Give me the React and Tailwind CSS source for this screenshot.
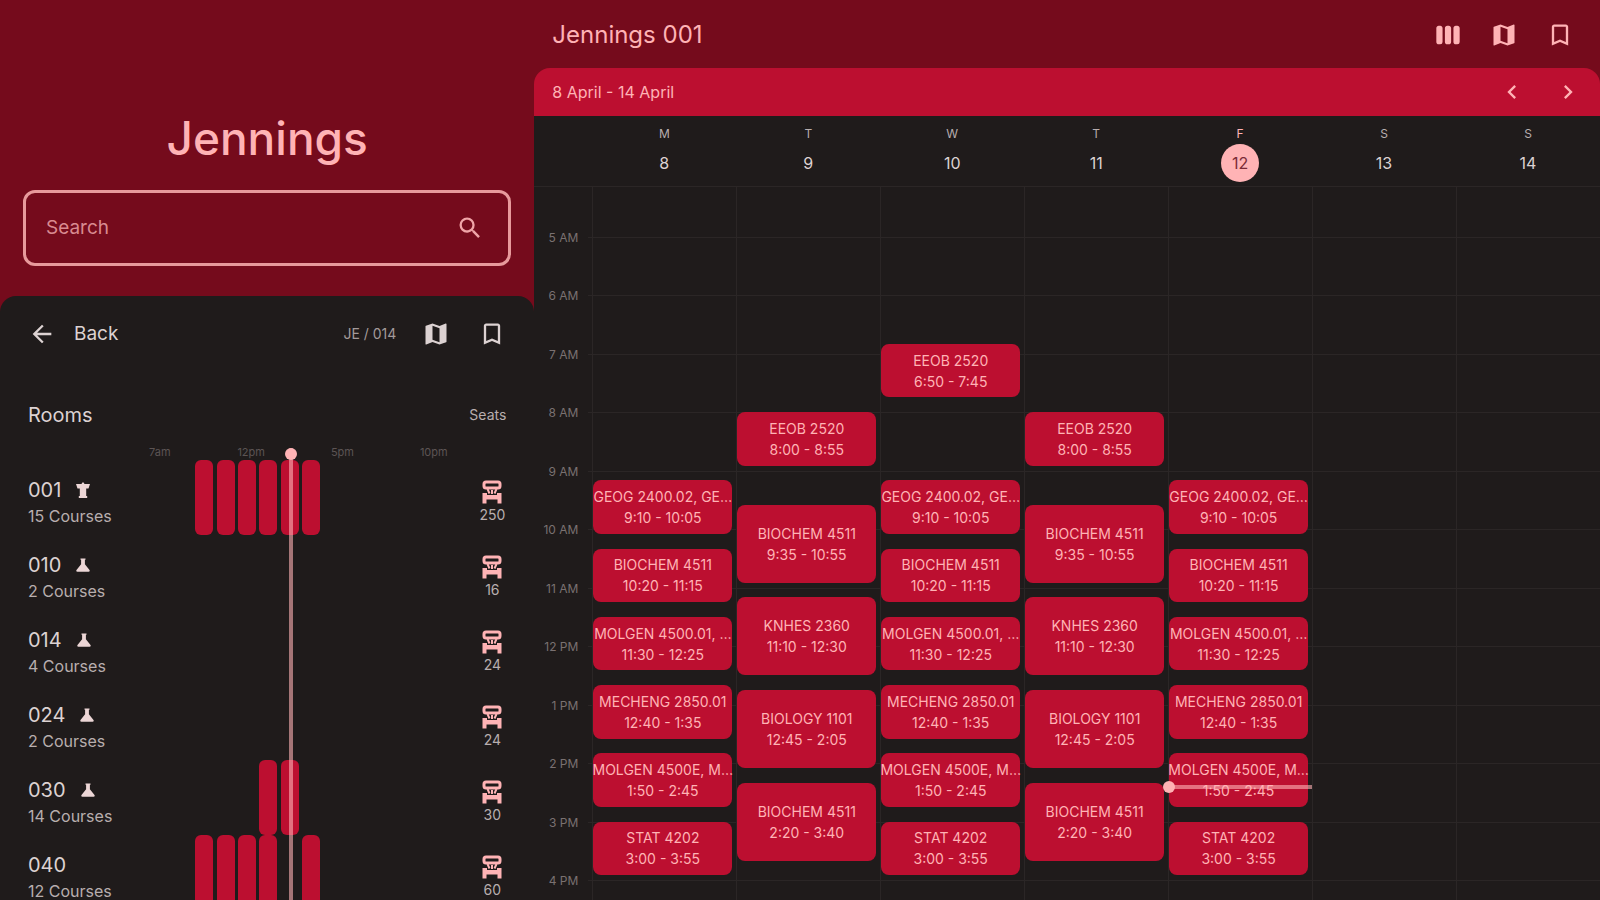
import {
    MdArrowBack,
    MdBookmarkBorder,
    MdChevronLeft,
    MdChevronRight,
    MdMap,
    MdSearch,
    MdViewWeek,
} from 'react-icons/md';

// First hour shown in the calendar and how many hours it spans
const START = 4;
const HOURS = 14;
const NOW = 14 + 25 / 60;

const hourLabels = ['5 AM', '6 AM', '7 AM', '8 AM', '9 AM', '10 AM', '11 AM', '12 PM', '1 PM', '2 PM', '3 PM', '4 PM'];

const mwf = [
    { name: 'GEOG 2400.02, GE…', time: '9:10 - 10:05', from: 9 + 10 / 60, to: 10 + 5 / 60 },
    { name: 'BIOCHEM 4511', time: '10:20 - 11:15', from: 10 + 20 / 60, to: 11.25 },
    { name: 'MOLGEN 4500.01, …', time: '11:30 - 12:25', from: 11.5, to: 12 + 25 / 60 },
    { name: 'MECHENG 2850.01', time: '12:40 - 1:35', from: 12 + 40 / 60, to: 13 + 35 / 60 },
    { name: 'MOLGEN 4500E, M…', time: '1:50 - 2:45', from: 13 + 50 / 60, to: 14.75 },
    { name: 'STAT 4202', time: '3:00 - 3:55', from: 15, to: 15 + 55 / 60 },
];

const tr = [
    { name: 'EEOB 2520', time: '8:00 - 8:55', from: 8, to: 8 + 55 / 60 },
    { name: 'BIOCHEM 4511', time: '9:35 - 10:55', from: 9 + 35 / 60, to: 10 + 55 / 60 },
    { name: 'KNHES 2360', time: '11:10 - 12:30', from: 11 + 10 / 60, to: 12.5 },
    { name: 'BIOLOGY 1101', time: '12:45 - 2:05', from: 12.75, to: 14 + 5 / 60 },
    { name: 'BIOCHEM 4511', time: '2:20 - 3:40', from: 14 + 20 / 60, to: 15 + 40 / 60 },
];

const early = { name: 'EEOB 2520', time: '6:50 - 7:45', from: 6 + 50 / 60, to: 7.75 };

const days = [
    { letter: 'M', date: 8, events: mwf },
    { letter: 'T', date: 9, events: tr },
    { letter: 'W', date: 10, events: [early, ...mwf] },
    { letter: 'T', date: 11, events: tr },
    { letter: 'F', date: 12, events: mwf, today: true },
    { letter: 'S', date: 13, events: [] },
    { letter: 'S', date: 14, events: [] },
];

const rooms = [
    { id: '001', icon: 'lectern', courses: 15, seats: 250, slots: [0, 1, 2, 3, 4, 5] },
    { id: '010', icon: 'lab', courses: 2, seats: 16, slots: [] },
    { id: '014', icon: 'lab', courses: 4, seats: 24, slots: [] },
    { id: '024', icon: 'lab', courses: 2, seats: 24, slots: [] },
    { id: '030', icon: 'lab', courses: 14, seats: 30, slots: [3, 4] },
    { id: '040', courses: 12, seats: 60, slots: [0, 1, 2, 3, 5] },
];

const ticks = [
    { label: '7am', hour: 7 },
    { label: '12pm', hour: 12 },
    { label: '5pm', hour: 17 },
    { label: '10pm', hour: 22 },
];

const dayPct = (hour) => `${(hour / 24) * 100}%`;
const calPct = (hour) => `${((hour - START) / HOURS) * 100}%`;

function LecternIcon() {
    return (
        <svg viewBox="0 0 16 16" className="size-4 text-[#ecd6d6]" fill="currentColor">
            <path d="M1 2h5.500l.8-1.500h1.400L9.500 2H15l-1.500 4.500h-2.300V14h1v2H3.800v-2h1V6.500H2.500z" />
        </svg>
    );
}

function LabIcon() {
    return (
        <svg viewBox="0 0 16 16" className="size-4 text-[#ecd6d6]" fill="currentColor">
            <path d="M5.500 1.500h5v1.300h-.6v4.400l4.600 5.800c.6 1 .1 1.700-.9 1.700H2.400c-1 0-1.500-.7-.9-1.700l4.600-5.800V2.800h-.6z" />
        </svg>
    );
}

function SeatIcon() {
    return (
        <svg viewBox="0 0 20 24" className="h-6 w-5 text-[#ffb3b5]" fill="none" stroke="currentColor">
            <rect x="2" y="2" width="16" height="6" rx="2" strokeWidth="3" />
            <path d="M5.500 9l2 4.500M14.500 9l-2 4.500M10 10v4" strokeWidth="2" />
            <path d="M.5 13h4.500v2h10v-2h4.500v10.500h-4v-4h-11v4h-4z" fill="currentColor" stroke="none" />
        </svg>
    );
}

function Room({ room }) {
    return (
        <li className="flex h-[75px] gap-3">
            <div className="relative flex-1 pt-[17px]">
                <div className="flex items-center gap-[14px] text-xl leading-[26px]">
                    {room.id}
                    {room.icon === 'lectern' && <LecternIcon />}
                    {room.icon === 'lab' && <LabIcon />}
                </div>
                <div className="text-base leading-[26px] text-[#b8aeae]">{room.courses} Courses</div>
                {room.slots.map((slot) => (
                    <div
                        key={slot}
                        className="absolute inset-y-0 w-[18px] rounded-md bg-[#bc0f30]"
                        style={{ left: dayPct(mwf[slot].from) }}
                    />
                ))}
            </div>
            <div className="flex w-7 flex-col items-center pt-5">
                <SeatIcon />
                <span className="mt-px text-sm text-[#b8aeae]">{room.seats}</span>
            </div>
        </li>
    );
}

function Sidebar() {
    return (
        <aside className="flex w-[calc(33.3333%+1px)] flex-col">
            <div className="px-[23px] pt-[108px] pb-[30px]">
                <h1 className="text-center text-[46px] leading-[60px] font-medium text-[#ffb3b5]">Jennings</h1>
                <label className="mt-[22px] flex h-[76px] items-center rounded-xl border-3 border-[#e89a9c] px-5">
                    <input
                        type="text"
                        aria-label="Search"
                        placeholder="Search"
                        className="min-w-0 flex-1 text-[19px] text-[#ffb3b5] outline-none placeholder:text-[#d98a90]"
                    />
                    <MdSearch className="mr-1 size-7 text-[#f0a5a8]" />
                </label>
            </div>

            <div className="min-h-0 flex-1 overflow-hidden rounded-t-2xl bg-[#1f1b1b] px-7 pt-5">
                <div className="flex h-9 items-center">
                    <button type="button" className="flex items-center gap-[18px] text-[19px]">
                        <MdArrowBack className="size-7" />
                        Back
                    </button>
                    <span className="ml-auto text-sm text-[#a39a9a]">JE / 014</span>
                    <button type="button" aria-label="Map" className="ml-[26px]">
                        <MdMap className="size-7" />
                    </button>
                    <button type="button" aria-label="Bookmark" className="ml-7">
                        <MdBookmarkBorder className="size-7" />
                    </button>
                </div>

                <div className="mt-[45px] flex h-9 items-center justify-between">
                    <h2 className="text-xl">Rooms</h2>
                    <span className="text-sm text-[#b8aeae]">Seats</span>
                </div>

                <div className="relative mt-[11px]">
                    {/* Hour ticks */}
                    <div className="relative mr-10 h-4 text-[11px] text-[#5c5454]">
                        {ticks.map((tick) => (
                            <span key={tick.label} className="absolute -translate-x-1/2 pl-2" style={{ left: dayPct(tick.hour) }}>
                                {tick.label}
                            </span>
                        ))}
                    </div>
                    <ul>
                        {rooms.map((room) => <Room key={room.id} room={room} />)}
                    </ul>
                    {/* Current time */}
                    <div className="pointer-events-none absolute top-1 right-10 bottom-0 left-0">
                        <div className="absolute h-full w-1 -translate-x-1/2 bg-[#ffb3b5]/60" style={{ left: dayPct(NOW) }} />
                        <div className="absolute size-3 -translate-x-1/2 rounded-full bg-[#ffb3b5]" style={{ left: dayPct(NOW) }} />
                    </div>
                </div>
            </div>
        </aside>
    );
}

function Event({ event }) {
    return (
        <div
            className="absolute right-1 left-0 flex flex-col items-center justify-center rounded-lg bg-[#bc0f30] text-sm leading-[21px] whitespace-nowrap text-[#ffb3b5]"
            style={{ top: calPct(event.from), height: `${((event.to - event.from) / HOURS) * 100}%` }}
        >
            <span>{event.name}</span>
            <span>{event.time}</span>
        </div>
    );
}

function Calendar() {
    return (
        <main className="flex min-w-0 flex-1 flex-col">
            <header className="flex h-17 shrink-0 items-center gap-7 pt-[2px] pr-[26px] pl-[18px] text-[#ffb3b5]">
                <h2 className="mr-auto text-2xl">Jennings 001</h2>
                <button type="button" aria-label="Week view">
                    <MdViewWeek className="size-7" />
                </button>
                <button type="button" aria-label="Map">
                    <MdMap className="size-7" />
                </button>
                <button type="button" aria-label="Bookmark">
                    <MdBookmarkBorder className="size-7" />
                </button>
            </header>

            <div className="flex h-12 shrink-0 items-center gap-7 rounded-t-2xl bg-[#bc0f30] px-[18px] text-[#ffb3b5]">
                <span className="mr-auto text-base">8 April - 14 April</span>
                <button type="button" aria-label="Previous week">
                    <MdChevronLeft className="size-7" />
                </button>
                <button type="button" aria-label="Next week">
                    <MdChevronRight className="size-7" />
                </button>
            </div>

            <div className="flex min-h-0 flex-1 flex-col bg-[#1f1b1b]">
                <div className="flex h-[71px] shrink-0 border-b border-[#2b2626] pl-[58px]">
                    {days.map((day) => (
                        <div key={day.date} className="flex flex-1 flex-col items-center pt-2">
                            <span className={day.today ? 'text-xs leading-5 text-[#ffb3b5]' : 'text-xs leading-5 text-[#b8aeae]'}>
                                {day.letter}
                            </span>
                            <span
                                className={
                                    day.today
                                        ? 'flex size-[38px] items-center justify-center rounded-full bg-[#ffb3b5] text-base text-[#7a2a35]'
                                        : 'flex size-[38px] items-center justify-center text-base'
                                }
                            >
                                {day.date}
                            </span>
                        </div>
                    ))}
                </div>

                <div className="min-h-0 flex-1 overflow-hidden">
                    <div className="relative -mt-[9px] flex h-[819px]">
                        {/* Hour lines */}
                        <div className="absolute top-px right-0 -bottom-px left-[54px] grid grid-rows-[repeat(14,1fr)]">
                            {Array.from({ length: HOURS }, (_, i) => (
                                <div key={i} className="border-b border-[#2b2626]" />
                            ))}
                        </div>
                        <div className="relative top-px w-[58px] shrink-0 text-xs text-[#7a7171]">
                            {hourLabels.map((label, i) => (
                                <span
                                    key={label}
                                    className="absolute right-[14px] -translate-y-1/2"
                                    style={{ top: calPct(START + 1 + i) }}
                                >
                                    {label}
                                </span>
                            ))}
                        </div>
                        {days.map((day) => (
                            <div key={day.date} className="relative flex-1 border-l border-[#2b2626]">
                                {day.events.map((event) => <Event key={event.time} event={event} />)}
                                {day.today && (
                                    <div className="absolute inset-x-0 flex h-3 -translate-y-1/2 items-center" style={{ top: calPct(NOW) }}>
                                        <div className="h-1 w-full bg-[#ffb3b5]/60" />
                                        <div className="absolute -left-[6px] size-3 rounded-full bg-[#ffb3b5]" />
                                    </div>
                                )}
                            </div>
                        ))}
                    </div>
                </div>
            </div>
        </main>
    );
}

export default function App() {
    return (
        <div className="flex h-screen overflow-hidden bg-[#750b1c] font-['Inter',sans-serif] text-[#dcd2d2]">
            <Sidebar />
            <Calendar />
        </div>
    );
}
